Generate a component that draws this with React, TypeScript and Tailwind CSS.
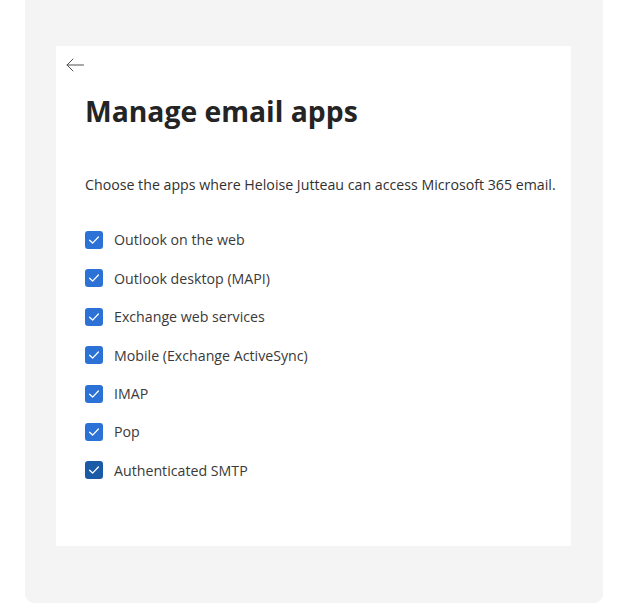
const apps = [
  "Outlook on the web",
  "Outlook desktop (MAPI)",
  "Exchange web services",
  "Mobile (Exchange ActiveSync)",
  "IMAP",
  "Pop",
  "Authenticated SMTP",
];

function Check({ dark }: { dark?: boolean }) {
  return (
    <span
      className={`w-[18px] h-[18px] rounded-[3px] flex items-center justify-center shrink-0 ${
        dark ? "bg-[#1b5aa7]" : "bg-[#2b71d6]"
      }`}
    >
      <svg width="14" height="14" viewBox="0 0 14 14" fill="none">
        <path d="M2.6 7.3 L5.6 10.1 L11.4 4" stroke="white" strokeWidth="1.3" strokeLinecap="round" strokeLinejoin="round" />
      </svg>
    </span>
  );
}

export default function App() {
  return (
    <div className="w-[628px] h-[612px] bg-white" style={{ fontFamily: '"Open Sans", "Noto Sans", sans-serif' }}>
      <div className="ml-[25px] w-[578px] h-[603px] bg-[#f4f4f4] rounded-b-[9px] pt-[46px] pl-[31px]">
        <div className="w-[515px] h-[500px] bg-white pt-[12px]">
          <button className="ml-[10px] flex text-[#505050]">
            <svg width="18" height="14" viewBox="0 0 18 14" fill="none">
              <path d="M17.5 7 H1 M7 1 L1 7 L7 13" stroke="currentColor" strokeWidth="1" strokeLinecap="round" strokeLinejoin="round" />
            </svg>
          </button>
          <div className="pl-[29px]">
            <h1 className="mt-[21px] text-[28.3px] font-bold leading-[36px] text-[#242424]">
              Manage email apps
            </h1>
            <p className="mt-[46px] text-[14.2px] leading-[20px] text-[#323130]">
              Choose the apps where Heloise Jutteau can access Microsoft 365 email.
            </p>
            <ul className="mt-[36px] flex flex-col gap-[20.4px]">
              {apps.map((a, i) => (
                <li key={a} className="flex items-center gap-[11px] h-[18px]">
                  <Check dark={i === apps.length - 1} />
                  <span className="text-[14.2px] text-[#3b3a39]">{a}</span>
                </li>
              ))}
            </ul>
          </div>
        </div>
      </div>
    </div>
  );
}
